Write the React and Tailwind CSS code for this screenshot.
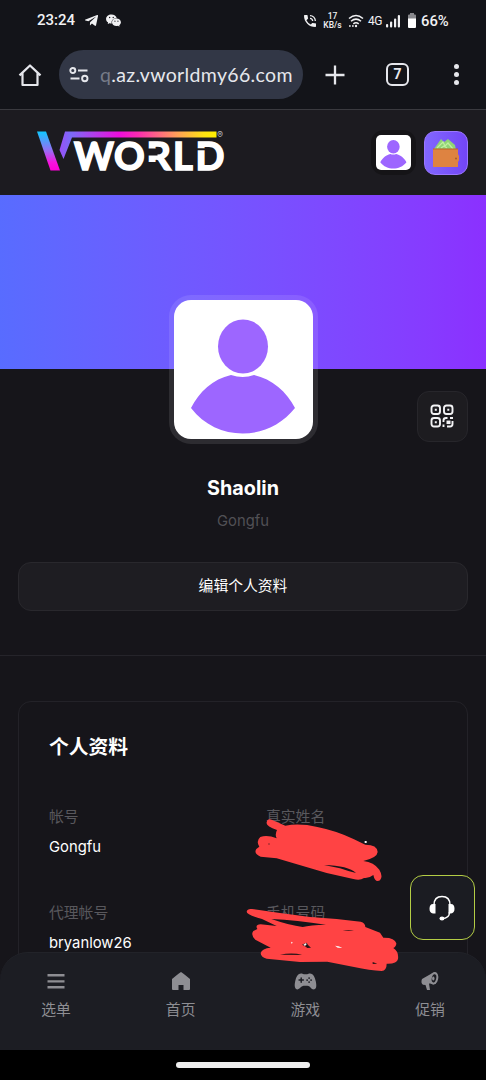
import { FaTelegramPlane } from "react-icons/fa";
import { AiFillWechat } from "react-icons/ai";
import { MdPhoneInTalk } from "react-icons/md";
import { IoGameController } from "react-icons/io5";

function StatusBar() {
   return (
      <div className="flex h-[41px] shrink-0 items-center justify-between pl-[37px] pr-[36px] font-['Roboto',sans-serif] text-[#f1f1f3]">
         <div className="flex items-center">
            <span className="w-[40px] text-[15px] font-medium">23:24</span>
            <FaTelegramPlane className="ml-[7px] size-[15px]" />
            <AiFillWechat className="ml-[6px] size-[17px]" />
         </div>
         <div className="flex items-center">
            <MdPhoneInTalk className="size-[16px]" />
            <div className="ml-[5px] flex w-[19px] flex-col items-center text-[8.500px] font-medium leading-[9px]">
               <span>17</span>
               <span>KB/s</span>
            </div>
            <svg className="ml-[6px] h-[14px] w-[16px]" viewBox="0 0 16 14" fill="none" stroke="currentColor" strokeWidth="1.5">
               <path d="M1 4.5Q8-1.5 15 4.5M3 7.2Q8 3 13 7.2M5.3 9.8Q8 7.7 10.7 9.8" />
               <circle cx="8" cy="12" r="1.2" fill="currentColor" stroke="none" />
               <path d="M1 12h1.7M4 12h1.7" strokeWidth="1.6" />
            </svg>
            <span className="ml-[4px] w-[14px] text-[12px] tracking-[-0.5px]">4G</span>
            <svg className="ml-[4px] h-[14px] w-[14px]" viewBox="0 0 14 14" fill="currentColor">
               <rect x="0" y="10" width="2.2" height="3.5" rx="1" />
               <rect x="4" y="7.5" width="2.2" height="6" rx="1" />
               <rect x="8" y="4.5" width="2.2" height="9" rx="1" />
               <rect x="11.800" y="1" width="2.2" height="12.5" rx="1" />
            </svg>
            <svg className="ml-[8px] h-[15px] w-[8px]" viewBox="0 0 8 15">
               <path d="M2 0h4v1.5h1A1 1 0 0 1 8 2.5V6H0V2.5a1 1 0 0 1 1-1h1z" fill="#88888c" />
               <path d="M0 5.5h8V14a1 1 0 0 1-1 1H1a1 1 0 0 1-1-1z" fill="#fff" />
            </svg>
            <span className="ml-[5px] w-[29px] whitespace-nowrap pt-px text-[14.800px] font-medium">66%</span>
         </div>
      </div>
   );
}

function BrowserBar() {
   return (
      <div className="flex h-[69px] shrink-0 items-center border-b border-[#3a3a3f] pl-[18px] pb-px text-[#e6e7ec]">
         <svg className="size-6" viewBox="0 0 24 24" fill="none" stroke="currentColor" strokeWidth="2.2" strokeLinejoin="round">
            <path d="M1.5 12.4 12 2.5l10.500 9.900M4.500 10v12h15V10" />
         </svg>
         <div className="ml-[17px] flex h-[49px] w-[244px] items-center rounded-full bg-[#323746] pl-[10px]">
            <svg className="h-[16px] w-[20px]" viewBox="0 0 20 16" fill="none" stroke="currentColor" strokeWidth="1.900">
               <circle cx="3.800" cy="3.500" r="2.500" />
               <path d="M9 3.500h9.500M1.500 11.500h9" />
               <circle cx="15.800" cy="11.500" r="2.700" />
            </svg>
            <span className="ml-[11px] whitespace-nowrap font-['Lato',sans-serif] text-[19.500px] leading-[24px] tracking-[0.350px]">
               <span className="text-[#777b88]">q</span>.az.vworldmy66.com
            </span>
         </div>
         <svg className="ml-[22px] size-5" viewBox="0 0 20 20" stroke="currentColor" strokeWidth="2.300">
            <path d="M10 0.500v19M0.500 10h19" />
         </svg>
         <div className="ml-[41px] flex h-[23px] w-[23px] items-center justify-center rounded-[6px] border-[2.500px] border-[#e6e7ec] font-['Roboto',sans-serif] text-[14px] font-bold">
            7
         </div>
         <div className="ml-[45px] flex flex-col gap-[3px]">
            <i className="size-[5px] rounded-full bg-[#e6e7ec]" />
            <i className="size-[5px] rounded-full bg-[#e6e7ec]" />
            <i className="size-[5px] rounded-full bg-[#e6e7ec]" />
         </div>
      </div>
   );
}

function Logo() {
   return (
      <svg className="h-[60px] w-[194px] overflow-visible" viewBox="0 -8 194 60">
         <defs>
            <linearGradient id="slash" x1="0" y1="0" x2="0" y2="1">
               <stop offset="0" stopColor="#10c8ff" />
               <stop offset="0.5" stopColor="#9a6bf4" />
               <stop offset="0.800" stopColor="#f813de" />
               <stop offset="1" stopColor="#ff00d8" />
            </linearGradient>
            <linearGradient id="beam" x1="0" y1="0" x2="1" y2="0">
               <stop offset="0" stopColor="#9a4ff8" />
               <stop offset="0.070" stopColor="#7a6bf8" />
               <stop offset="0.380" stopColor="#ee0ddc" />
               <stop offset="0.500" stopColor="#fb2cb0" />
               <stop offset="0.750" stopColor="#ffa058" />
               <stop offset="0.920" stopColor="#ffe312" />
               <stop offset="1" stopColor="#fff000" />
            </linearGradient>
         </defs>
         <path d="M1 0.500h9L24 39.500h-9.500z" fill="url(#slash)" />
         <path d="M29 0.500h151.500v6H36L27.500 28l-4-9z" fill="url(#beam)" />
         <text x="38 78 110.500 137 159.500" y="39.200" fill="#fff" stroke="#fff" strokeWidth="1.600" fontFamily="Lato, sans-serif" fontWeight="700" fontSize="38">
            WORLD
         </text>
         {/* stencil cuts in the R and the D */}
         <path d="M112 17.500h9.500v7h-9.500zM112 31h9.500v11h-9.500zM161 17.200h8.500v2h-8.500z" fill="#1c1b20" />
         <text x="181" y="6.500" fill="#b8b8bd" fontFamily="Inter, sans-serif" fontSize="9">®</text>
      </svg>
   );
}

function Avatar({ className }) {
   return (
      <svg className={className} viewBox="0 0 139 139" fill="#9d66ff">
         <rect width="139" height="139" fill="#fff" />
         <ellipse cx="69" cy="46.500" rx="25" ry="27" />
         <path d="M17 108C25 92 39 79 57 75Q69 79 80 75C98 79 113 92 121 108C94 142 43 142 17 108z" />
      </svg>
   );
}

function WalletIcon() {
   return (
      <svg className="h-[31px] w-[28px]" viewBox="0 0 28 31">
         <path d="M2 12 9 2l3 3 4-3 7 6 1 5z" fill="#91d477" />
         <path d="m5 11 6-6 2 4 3-3 5 6M9 11l3-2 3 2" fill="none" stroke="#c0efa0" strokeWidth="1.200" />
         <path d="M1 12h25v5l1 2v4l-1 2v5H1z" fill="#de8341" />
         <path d="M1 12h25" stroke="#b96529" />
         <circle cx="24" cy="21.500" r="0.900" fill="#9d5a28" />
      </svg>
   );
}

function SiteHeader() {
   return (
      <header className="flex h-[85px] shrink-0 items-center bg-[#1c1b20] pl-9">
         <Logo />
         <div className="ml-[141px] flex size-[45px] items-center justify-center rounded-[13px] bg-[#151417]">
            <Avatar className="size-[35px] rounded-[5px]" />
         </div>
         <div className="ml-[8px] flex size-[44px] items-center justify-center rounded-[11px] border border-[#9a76ff] bg-linear-to-r from-[#8167ff] to-[#7345f5]">
            <WalletIcon />
         </div>
      </header>
   );
}

function QrIcon() {
   return (
      <svg className="mr-px mb-px size-6" viewBox="0 0 24 24" fill="none" stroke="#f3f3f5" strokeWidth="1.900">
         <rect x="1.500" y="1.500" width="8.500" height="8.500" rx="2.500" />
         <rect x="14" y="1.500" width="8.500" height="8.500" rx="2.500" />
         <rect x="1.500" y="14" width="8.500" height="8.500" rx="2.500" />
         <path d="M4.800 5.800h2M17.300 5.800h2M4.800 18.300h2" />
         <path d="M13.500 18v-1.500q0-2.500 2.500-2.500h1.500M20 14h3M13.500 20.500V23M17 22.500h3q2.500 0 2.500-2.500v-3" />
         <path d="M16.500 18.300h4" strokeWidth="3.500" />
      </svg>
   );
}

function Profile() {
   return (
      <section className="flex shrink-0 flex-col">
         <div className="h-[174px] bg-linear-to-r from-[#586cff] to-[#8b30ff]" />
         <div className="flex h-[287px] flex-col items-center border-b border-[#25242a] px-[18px]">
            <div className="relative z-10 -mt-[74px] rounded-[22px] bg-white/10 p-[5px]">
               <Avatar className="size-[139px] rounded-[17px]" />
            </div>
            <div className="-mt-[53px] flex size-[51px] items-center justify-center self-end rounded-[12px] border border-[#27262b] bg-[#1d1c20]">
               <QrIcon />
            </div>
            <h1 className="mt-[32px] text-[19.800px] font-bold leading-[28px] text-white">Shaolin</h1>
            <p className="mt-[7px] text-[14.800px] leading-[24px] text-[#515055]">Gongfu</p>
            <button className="mt-[29px] h-[49px] w-full shrink-0 rounded-[13px] border border-[#29282d] bg-[#1e1d22] text-[14.800px] text-white">
               编辑个人资料
            </button>
         </div>
      </section>
   );
}

const fields = [
   { label: "帐号", value: "Gongfu" },
   { label: "真实姓名", value: "" },
   { label: "代理帐号", value: "bryanlow26" },
   { label: "手机号码", value: "" },
];

function DetailsCard() {
   return (
      <section className="mx-[18px] mt-[45px] h-[400px] shrink-0 rounded-[13px] border border-[#232228] px-[30px] pt-[30px]">
         <h2 className="text-[19.800px] font-bold leading-[30px] text-white">个人资料</h2>
         <div className="mt-[40px] grid grid-cols-[217px_1fr] gap-y-[36px]">
            {fields.map((f) => (
               <div key={f.label} className="h-[60px] text-[14.800px] leading-[30px]">
                  <p className="h-[30px] text-[#59585d]">{f.label}</p>
                  <p className="h-[30px] text-white">{f.value}</p>
               </div>
            ))}
         </div>
      </section>
   );
}

// red marker strokes over the private values
function Redactions() {
   return (
      <svg className="pointer-events-none absolute left-[240px] top-[795px] z-30 h-[190px] w-[246px]" viewBox="0 0 738 570" fill="#ff4344">
         <path d="M80 82Q82 69 95 74L136 92Q180 84 232 96Q292 108 342 133L376 149Q412 149 413 171Q412 188 370 198Q402 202 418 224Q430 244 420 256Q405 264 400 240Q386 251 372 249Q360 258 340 252L260 234L176 209L110 190L62 185Q40 175 49 162L58 155Q47 138 61 126Q82 119 110 130Q104 119 111 105Q77 94 80 82z" />
         <path d="M252 210Q325 212 348 234Q322 228 300 220z" fill="#16151a" />
         <path d="M20 350Q22 340 36 342L120 354L210 366L290 372L362 380Q376 384 376 396L420 413L430 428Q464 427 469 445Q469 455 460 459Q477 470 474 492Q471 507 440 506Q440 526 425 528Q390 526 342 516L262 500L180 501L80 491Q62 486 62 474Q66 460 92 458L46 434Q31 420 40 408L52 402Q44 389 62 388L110 393L66 372Q19 359 20 350z" />
         <path d="M94 372Q170 376 258 389Q210 390 188 396Q148 391 94 372z" fill="#16151a" />
         <path d="M120 479Q158 472 187 480zM398 501l14 5-14 1zM308 408q18-4 34 0zM186 449l14-6 4 7 9 8-11 1-7-5z" fill="#2a1518" />
         <path d="M190 449l8-5 2 4-5 5zM285 452l11 2 11 5-14-1zM153 440l6 3-5 3zM374 138h6v6h-6z" fill="#f6f1f1" />
         <circle cx="87" cy="147" r="2" fill="#5c2023" />
      </svg>
   );
}

function SupportButton() {
   return (
      <button className="absolute left-[410px] top-[875px] z-20 flex size-[65px] items-center justify-center rounded-[13px] border border-[#b4cd45] bg-[#1b1c22] pr-px">
         <svg className="h-[26px] w-[26px]" viewBox="0 0 26 26" fill="none" stroke="#fff">
            <path d="M5 10Q5 1.500 13 1.500Q21 1.500 21 10M20.500 17Q20.500 23.500 13 23.500" strokeWidth="1.500" />
            <path d="M6.500 9v9.500H4Q0.500 18 0.500 13.700Q0.500 9 4 9zM19.500 9v9.500H22Q25.500 18 25.500 13.700Q25.500 9 22 9z" fill="#fff" stroke="none" />
            <ellipse cx="13" cy="23.500" rx="2.500" ry="1.900" fill="#fff" stroke="none" />
         </svg>
      </button>
   );
}

function MenuGlyph() {
   return (
      <svg className="h-[20px] w-[18px]" viewBox="0 0 18 20" fill="currentColor">
         <path d="M0.500 3h17v2.400h-17zM0.500 9.200h17v2.400h-17zM0.500 15h17v2.400h-17z" />
      </svg>
   );
}

function HomeGlyph() {
   return (
      <svg className="h-[20px] w-[20px]" viewBox="0 0 20 20" fill="currentColor">
         <path d="M10 1Q10.500 1 19 8V18q0 1-1 1h-5.500v-5h-5v5H2q-1 0-1-1V8Q9.500 1 10 1z" />
      </svg>
   );
}

function MegaphoneGlyph() {
   return (
      <svg className="h-[20px] w-[20px]" viewBox="0 0 20 20" fill="currentColor">
         <path d="M2 8 12.500 2 16 13 9 12.500l1 6.500H7L5.500 14 3 13.800Q0.500 12 2 8z" />
         <ellipse cx="14" cy="7.300" rx="4.200" ry="6.400" transform="rotate(12 14 7.300)" />
         <ellipse cx="14" cy="7.300" rx="2.200" ry="4.200" transform="rotate(12 14 7.300)" fill="#1c1d23" />
         <ellipse cx="13.300" cy="7.500" rx="1.200" ry="2.100" />
      </svg>
   );
}

const navItems = [
   { label: "选单", icon: <MenuGlyph /> },
   { label: "首页", icon: <HomeGlyph /> },
   { label: "游戏", icon: <IoGameController className="size-[23px]" /> },
   { label: "促销", icon: <MegaphoneGlyph /> },
];

function BottomNav() {
   return (
      <nav className="z-10 flex h-[98px] shrink-0 justify-between rounded-t-[28px] border-t border-[#222329] bg-[#1c1d23] px-[41px] pt-[17px] text-[#8e8e93]">
         {navItems.map((item) => (
            <div key={item.label} className="flex w-[30px] flex-col items-center">
               <div className="flex h-[22px] items-center">{item.icon}</div>
               <span className="mt-[6px] whitespace-nowrap text-[14.800px] leading-[24px]">{item.label}</span>
            </div>
         ))}
      </nav>
   );
}

export default function App() {
   return (
      <div className="relative flex h-[1080px] w-[486px] flex-col overflow-hidden bg-[#16151a] font-['Inter','Noto_Sans_CJK_SC',sans-serif]">
         <div className="flex shrink-0 flex-col bg-[#131419]">
            <StatusBar />
            <BrowserBar />
         </div>
         <SiteHeader />
         <main className="-mb-[28px] flex min-h-0 flex-1 flex-col overflow-hidden">
            <Profile />
            <DetailsCard />
         </main>
         <BottomNav />
         <div className="flex h-[30px] shrink-0 justify-center bg-black pt-[12px]">
            <div className="h-[6px] w-[134px] rounded-full bg-[#efefef]" />
         </div>
         <SupportButton />
         <Redactions />
      </div>
   );
}
